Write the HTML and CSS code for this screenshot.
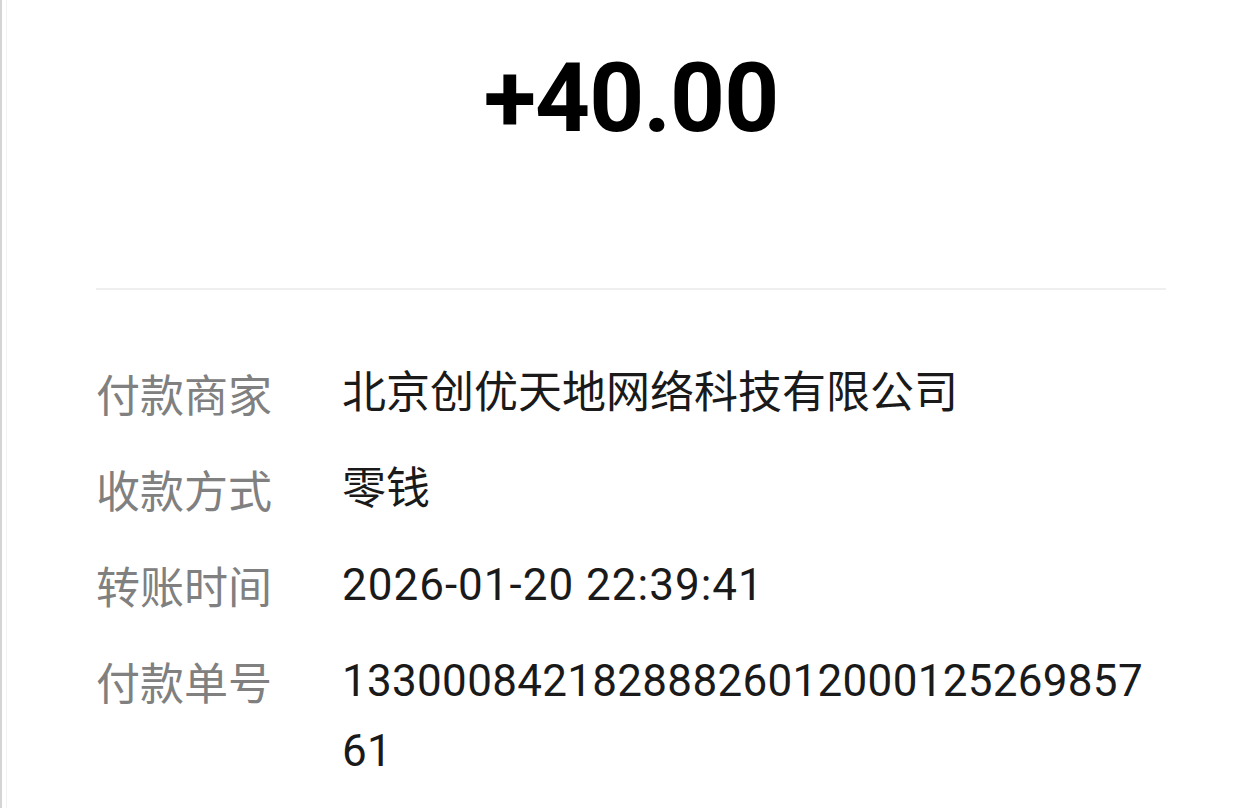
FILE: index.html
```html
<!DOCTYPE html>
<html lang="zh-CN">

<head>
    <meta charset="UTF-8">
    <meta name="viewport" content="width=device-width, initial-scale=1.0">
    <title>交易详情</title>
    <link rel="stylesheet" href="styles.css">
</head>

<body>
    <div class="page">
        <!-- Amount -->
        <div class="amount">+40.00</div>

        <div class="divider"></div>

        <!-- Detail rows -->
        <div class="details">
            <div class="row">
                <div class="label">付款商家</div>
                <div class="value">北京创优天地网络科技有限公司</div>
            </div>
            <div class="row">
                <div class="label">收款方式</div>
                <div class="value">零钱</div>
            </div>
            <div class="row">
                <div class="label">转账时间</div>
                <div class="value time">2026-01-20 22:39:41</div>
            </div>
            <div class="row">
                <div class="label">付款单号</div>
                <div class="value number">1330008421828882601200012526985761</div>
            </div>
        </div>
    </div>
</body>

</html>
```

FILE: styles.css
```css
/* General Styling */
body {
    margin: 0;
    padding: 0;
    background-color: #ffffff;
    font-family: Roboto, "Noto Sans CJK SC", sans-serif;
    color: #1a1a1a;
}

.page {
    min-height: 808px;
    box-sizing: border-box;
    padding: 50px 82px 0 96px;
    border-left: 2px solid #d4d4d4;
    box-shadow: inset 4px 0 0 #ffffff, inset 5px 0 0 #f2f2f2;
}

/* Amount */
.amount {
    text-align: center;
    font-size: 96px;
    line-height: 96px;
    font-weight: 700;
    color: #000;
    letter-spacing: -1px;
    margin-left: -2px;
}

.divider {
    height: 2px;
    background-color: #efefef;
    margin-top: 142px;
    margin-left: -2px;
}

/* Detail rows */
.details {
    display: flex;
    flex-direction: column;
    gap: 26px;
    margin-top: 68px;
    margin-left: -2px;
}

.row {
    display: flex;
    font-size: 44px;
    line-height: 70px;
}

.label {
    width: 246px;
    flex-shrink: 0;
    color: #808080;
    font-family: "Noto Sans CJK SC", sans-serif;
}

.value {
    flex: 1;
    min-width: 0;
    color: #1a1a1a;
    font-family: Roboto, "Noto Sans CJK SC", sans-serif;
}

.time {
    letter-spacing: 1px;
}

.number {
    max-width: 810px;
    letter-spacing: 0.3px;
    word-break: break-all;
}
```
